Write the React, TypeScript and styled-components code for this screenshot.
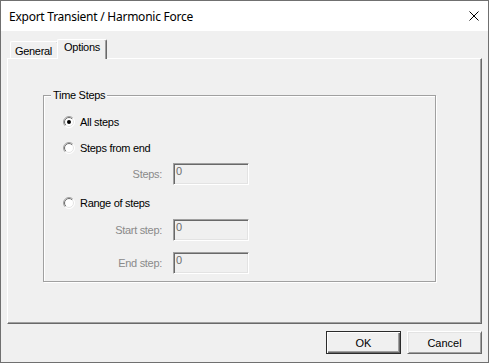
import React from "react";
import styled, { createGlobalStyle, css } from "styled-components";

const Global = createGlobalStyle`
  html, body { margin: 0; padding: 0; background: #f0f0f0; }
  body { font-family: "Liberation Sans", Arial, sans-serif; }
  * { box-sizing: border-box; }
`;

const Window = styled.div`
  width: 489px;
  height: 363px;
  border: 1px solid #707070;
  background: #f0f0f0;
  display: flex;
  flex-direction: column;
  overflow: hidden;
`;

const TitleBar = styled.div`
  height: 30px;
  background: #ffffff;
  display: flex;
  align-items: center;
  justify-content: space-between;
  padding: 0 9px 0 8px;
`;

const Title = styled.span`
  font-family: "Noto Sans", "Liberation Sans", sans-serif;
  font-size: 12px;
  letter-spacing: -0.25px;
  color: #000;
`;

const Body = styled.div`
  flex: 1;
  display: flex;
  flex-direction: column;
  padding: 8px 6px 8px 6px;
  font-family: "Liberation Sans", Arial, sans-serif;
  font-size: 11px;
  letter-spacing: -0.3px;
  color: #000;
`;

const TabStrip = styled.div`
  height: 19px;
  display: flex;
  align-items: flex-end;
  padding-left: 3px;
`;

const Tab = styled.div<{ $selected?: boolean }>`
  background: #f0f0f0;
  border-top: 1px solid #ffffff;
  border-left: 1px solid #ffffff;
  border-right: 1px solid #696969;
  box-shadow: inset -1px 0 0 #a0a0a0;
  border-radius: 2px 2px 0 0;
  display: flex;
  justify-content: center;
  padding-top: 1px;
  line-height: 13px;
  ${(p) =>
    p.$selected
      ? css`
          width: 50px;
          height: 20px;
          margin-bottom: -1px;
          margin-left: -2px;
          position: relative;
          z-index: 1;
        `
      : css`
          width: 49px;
          height: 17px;
          padding-top: 3px;
          padding-right: 2px;
        `}
`;

const Panel = styled.div`
  flex: 1;
  border-top: 1px solid #ffffff;
  border-left: 1px solid #ffffff;
  border-right: 1px solid #696969;
  border-bottom: 1px solid #696969;
  box-shadow: inset -1px -1px 0 #a0a0a0;
  padding: 36px 0 0 35px;
`;

const Group = styled.div`
  position: relative;
  width: 393px;
  height: 187px;
  border: 1px solid #a0a0a0;
  box-shadow: inset 1px 1px 0 #ffffff, 1px 1px 0 #ffffff;
  display: flex;
  flex-direction: column;
  padding: 18px 0 0 19px;
`;

const Legend = styled.span`
  position: absolute;
  left: 7px;
  top: -7px;
  padding: 0 2px;
  background: #f0f0f0;
  line-height: 13px;
`;

const RadioRow = styled.label<{ $gap: number }>`
  display: flex;
  align-items: center;
  gap: 5px;
  height: 16px;
  margin-top: ${(p) => p.$gap}px;
`;

const FieldRow = styled.div<{ $gap: number }>`
  display: flex;
  align-items: center;
  margin-top: ${(p) => p.$gap}px;
  margin-left: -19px;
`;

const FieldLabel = styled.span`
  width: 118px;
  text-align: right;
  color: #8a8a8a;
  margin-right: 11px;
`;

const Input = styled.div`
  width: 76px;
  height: 22px;
  background: #f0f0f0;
  border-top: 1px solid #a0a0a0;
  border-left: 1px solid #a0a0a0;
  border-right: 1px solid #ffffff;
  border-bottom: 1px solid #ffffff;
  box-shadow: inset 1px 1px 0 #696969, inset -1px -1px 0 #e3e3e3;
  padding: 1px 0 0 2px;
  line-height: 12px;
  color: #6d6d6d;
`;

const ButtonRow = styled.div`
  display: flex;
  justify-content: flex-end;
  gap: 6px;
  margin-top: 7px;
`;

const Button = styled.div<{ $default?: boolean }>`
  width: 75px;
  height: 23px;
  display: flex;
  align-items: center;
  justify-content: center;
  background: #f0f0f0;
  letter-spacing: 0;
  ${(p) =>
    p.$default
      ? css`
          border: 1px solid #2b2b2b;
          box-shadow: inset 1px 1px 0 #ffffff, inset -1px -1px 0 #696969,
            inset -2px -2px 0 #a0a0a0;
        `
      : css`
          border-top: 1px solid #ffffff;
          border-left: 1px solid #ffffff;
          border-right: 1px solid #696969;
          border-bottom: 1px solid #696969;
          box-shadow: inset 1px 1px 0 #e3e3e3, inset -1px -1px 0 #a0a0a0;
        `}
`;

const CloseIcon = () => (
  <svg width="10" height="10" viewBox="0 0 10 10">
    <path d="M0.5 0.5 L9.5 9.5 M9.5 0.5 L0.5 9.5" stroke="#000" strokeWidth="1" fill="none" />
  </svg>
);

const RadioIcon = ({ checked }: { checked?: boolean }) => (
  <svg width="12" height="12" viewBox="0 0 12 12">
    <defs>
      <linearGradient id="rgOuter" x1="0" y1="0" x2="1" y2="1">
        <stop offset="0.45" stopColor="#a0a0a0" />
        <stop offset="0.55" stopColor="#ffffff" />
      </linearGradient>
      <linearGradient id="rgInner" x1="0" y1="0" x2="1" y2="1">
        <stop offset="0.45" stopColor="#696969" />
        <stop offset="0.55" stopColor="#e3e3e3" />
      </linearGradient>
    </defs>
    <circle cx="6" cy="6" r="5.5" fill="#fff" stroke="url(#rgOuter)" strokeWidth="1" />
    <circle cx="6" cy="6" r="4.5" fill="#fff" stroke="url(#rgInner)" strokeWidth="1" />
    {checked && <circle cx="6" cy="6" r="2" fill="#000" />}
  </svg>
);

export default function App() {
  return (
    <>
      <Global />
      <Window>
        <TitleBar>
          <Title>Export Transient / Harmonic Force</Title>
          <CloseIcon />
        </TitleBar>
        <Body>
          <TabStrip>
            <Tab>General</Tab>
            <Tab $selected>Options</Tab>
          </TabStrip>
          <Panel>
            <Group>
              <Legend>Time Steps</Legend>
              <RadioRow $gap={0}>
                <RadioIcon checked />
                All steps
              </RadioRow>
              <RadioRow $gap={10}>
                <RadioIcon />
                Steps from end
              </RadioRow>
              <FieldRow $gap={7}>
                <FieldLabel>Steps:</FieldLabel>
                <Input>0</Input>
              </FieldRow>
              <RadioRow $gap={10}>
                <RadioIcon />
                Range of steps
              </RadioRow>
              <FieldRow $gap={8}>
                <FieldLabel>Start step:</FieldLabel>
                <Input>0</Input>
              </FieldRow>
              <FieldRow $gap={11}>
                <FieldLabel>End step:</FieldLabel>
                <Input>0</Input>
              </FieldRow>
            </Group>
          </Panel>
          <ButtonRow>
            <Button $default>OK</Button>
            <Button>Cancel</Button>
          </ButtonRow>
        </Body>
      </Window>
    </>
  );
}
